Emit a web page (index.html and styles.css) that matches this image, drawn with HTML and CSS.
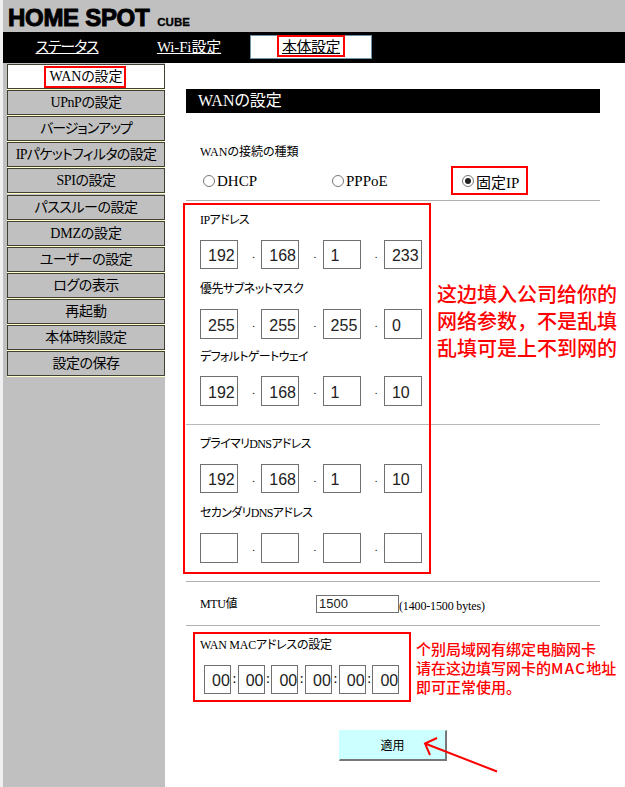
FILE: index.html
```html
<!DOCTYPE html>
<html lang="ja">
<head>
<meta charset="utf-8">
<title>HOME SPOT CUBE</title>
<link rel="stylesheet" href="styles.css">
</head>
<body>
<header class="brand"><span class="brand-name">HOME SPOT</span><span class="brand-sub">CUBE</span></header>
<nav class="tabs">
  <a class="tab"><span class="t tab-status">ステータス</span></a>
  <a class="tab"><span class="t tab-wifi">Wi-Fi設定</span></a>
  <a class="tab active"><span class="t tab-unit">本体設定</span></a>
</nav>
<div class="body">
  <aside class="side">
    <ul class="menu">
      <li class="current tight"><span class="t">WANの設定</span></li>
      <li><span class="t">UPnPの設定</span></li>
      <li class="tightest"><span class="t">バージョンアップ</span></li>
      <li class="tighter"><span class="t">IPパケットフィルタの設定</span></li>
      <li class="tall"><span class="t">SPIの設定</span></li>
      <li><span class="t">パススルーの設定</span></li>
      <li class="loose"><span class="t">DMZの設定</span></li>
      <li><span class="t">ユーザーの設定</span></li>
      <li><span class="t">ログの表示</span></li>
      <li class="loose"><span class="t">再起動</span></li>
      <li><span class="t">本体時刻設定</span></li>
      <li><span class="t">設定の保存</span></li>
    </ul>
  </aside>
  <main class="main">
    <h1 class="title"><span class="t title-text">WANの設定</span></h1>
    <section class="type">
      <div class="label"><span class="t l-type">WANの接続の種類</span></div>
      <div class="radios">
        <label class="radio"><i class="dot"></i><span class="t">DHCP</span></label>
        <label class="radio"><i class="dot"></i><span class="t">PPPoE</span></label>
        <label class="radio"><i class="dot on"></i><span class="t">固定IP</span></label>
      </div>
    </section>
    <section class="network">
      <div class="label"><span class="t l-ip">IPアドレス</span></div>
      <div class="addr"><input value="192"><b>.</b><input value="168"><b>.</b><input value="1"><b>.</b><input value="233"></div>
      <div class="label mask"><span class="t l-mask">優先サブネットマスク</span></div>
      <div class="addr tall"><input value="255"><b>.</b><input value="255"><b>.</b><input value="255"><b>.</b><input value="0"></div>
      <div class="label gate"><span class="t l-gate">デフォルトゲートウェイ</span></div>
      <div class="addr tall"><input value="192"><b>.</b><input value="168"><b>.</b><input value="1"><b>.</b><input value="10"></div>
    </section>
    <section class="dns">
      <div class="label"><span class="t l-dns">プライマリDNSアドレス</span></div>
      <div class="addr"><input value="192"><b>.</b><input value="168"><b>.</b><input value="1"><b>.</b><input value="10"></div>
      <div class="label dns2"><span class="t l-dns">セカンダリDNSアドレス</span></div>
      <div class="addr tall"><input><b>.</b><input><b>.</b><input><b>.</b><input></div>
    </section>
    <section class="mtu">
      <div class="label"><span class="t l-mtu">MTU値</span></div>
      <input class="mtu-input" value="1500"><span class="t mtu-range">(1400-1500 bytes)</span>
    </section>
    <section class="mac">
      <div class="label"><span class="t l-mac">WAN MACアドレスの設定</span></div>
      <div class="mac-row"><input value="00"><b>:</b><input value="00"><b>:</b><input value="00"><b>:</b><input value="00"><b>:</b><input value="00"><b>:</b><input value="00"></div>
    </section>
    <button class="apply"><span class="t apply-text">適用</span></button>
  </main>
</div>
<div class="mark mark-menu"></div>
<div class="mark mark-tab"></div>
<div class="mark mark-radio"></div>
<div class="mark mark-network"></div>
<div class="mark mark-mac"></div>
<p class="note note-network" lang="zh-CN"><span class="t">这边填入公司给你的</span><br><span class="t">网络参数，不是乱填</span><br><span class="t">乱填可是上不到网的</span></p>
<p class="note note-mac" lang="zh-CN"><span class="t">个别局域网有绑定电脑网卡</span><br><span class="t">请在这边填写网卡的<span class="latin">MAC</span>地址</span><br><span class="t">即可正常使用。</span></p>
<svg class="arrow" width="80" height="40" viewBox="0 0 80 40"><path d="M77 36.500L5 8.500M17 3L5 8.500L10 20" fill="none" stroke="#f00" stroke-width="2"/></svg>
</body>
</html>
```
FILE: styles.css
```css
* { box-sizing: border-box; }
body {
  margin: 0;
  width: 625px;
  height: 787px;
  position: relative;
  overflow: hidden;
  background: #fff;
  border-left: 3px solid #f0f0f0;
  color: #000;
  font-family: "Liberation Serif", "Noto Sans CJK JP", serif;
  font-size: 15px;
  font-feature-settings: "palt";
}
.t { white-space: nowrap; }
.brand {
  height: 32px;
  background: #c0c0c0;
  padding-left: 5px;
  font-family: "Liberation Sans", sans-serif;
  font-weight: bold;
  line-height: 35px;
  white-space: nowrap;
}
.brand-name { font-size: 24px; letter-spacing: -0.300px; -webkit-text-stroke: 1px #000; }
.brand-sub { font-size: 11.500px; margin-left: 8px; -webkit-text-stroke: 0.3px #000; }
.tabs {
  height: 31px;
  background: #000;
  display: flex;
  padding-top: 3px;
  padding-left: 3px;
}
.tab {
  width: 122px;
  height: 24px;
  display: flex;
  justify-content: center;
  line-height: 24px;
  color: #fff;
  text-decoration: underline;
}
.tab.active {
  background: #fff;
  color: #000;
  border: 1px solid #6f93ab;
}
.tab-status { letter-spacing: -1.100px; }
.tab-wifi { letter-spacing: -0.150px; }
.tab-unit { letter-spacing: -0.500px; }
.tab.active { line-height: 22px; }
.body { display: flex; height: 724px; }
.side { width: 162px; background: #c0c0c0; padding: 1px 0 0 4px; }
.menu { list-style: none; margin: 0; padding: 0; }
.menu li {
  height: 25px;
  margin-bottom: 1px;
  border: 1px solid #404034;
  box-shadow: 0 1px #ffffcc;
  line-height: 23px;
  text-align: center;
  font-size: 14px;
  letter-spacing: -0.450px;
}
.menu .tall { margin-bottom: 2px; }
.menu .current { background: #fff; }
.menu .tight { letter-spacing: -0.100px; }
.menu .tighter { letter-spacing: -0.700px; }
.menu .tightest { letter-spacing: -1.100px; }
.menu .loose { letter-spacing: -0.200px; }
.main { width: 414px; margin-left: 21px; padding-top: 26px; }
.title {
  margin: 0;
  height: 24px;
  padding-left: 12px;
  background: #000;
  color: #fff;
  font-size: 16px;
  font-weight: normal;
  line-height: 24px;
}
.label { height: 20px; line-height: 20px; padding-left: 14px; font-size: 12px; }
.l-ip { letter-spacing: -0.600px; }
.l-mask { letter-spacing: -0.500px; }
.l-gate, .l-dns { letter-spacing: -0.650px; }
.l-mtu { letter-spacing: -0.400px; }
.l-mac { letter-spacing: -0.250px; }
.type { height: 88px; padding-top: 29px; border-bottom: 1px solid #b0b0b0; }
.radios { display: flex; margin-top: 9px; padding-left: 17px; }
.radio { width: 129px; height: 20px; display: flex; align-items: center; gap: 2px; }
.dot {
  width: 12px;
  height: 12px;
  border: 1px solid #777;
  border-radius: 50%;
  display: grid;
  place-items: center;
}
.dot.on { margin-left: 1px; }
.dot.on::after { content: ""; width: 6px; height: 6px; border-radius: 50%; background: #222; }
.network { height: 224px; padding-top: 9px; border-bottom: 1px solid #b8b8b8; }
.addr { display: flex; height: 29px; margin-top: 10px; padding-left: 14px; }
.addr.tall { height: 30px; }
input {
  width: 38px;
  height: 100%;
  margin: 0;
  padding: 3px 0 0 7px;
  border: 1px solid #707070;
  border-radius: 0;
  background: #fff;
  color: #222;
  font-family: "Liberation Sans", sans-serif;
  font-size: 16px;
  outline: none;
}
.addr b {
  width: 23.300px;
  padding-left: 8px;
  text-align: center;
  font-weight: normal;
  font-size: 11px;
  line-height: 28px;
}
.mask { margin-top: 10px; }
.gate { margin-top: 8px; }
.gate + .addr { margin-top: 9px; }
.dns { height: 157px; padding-top: 9px; border-bottom: 1px solid #b0b0b0; }
.dns2 { margin-top: 10px; }
.mtu { height: 44px; display: flex; align-items: flex-start; padding-top: 12px; border-bottom: 1px solid #b0b0b0; }
.mtu .label { width: 130px; }
.mtu-input { width: 83px; height: 18px; margin-top: 1px; padding: 0 0 1px 2px; font-size: 13px; }
.mtu-range { font-size: 12px; line-height: 24px; letter-spacing: -0.150px; }
.mac { height: 104px; padding-top: 9px; }
.mac-row { display: flex; height: 29px; margin-top: 10px; padding-left: 18px; }
.mac-row input { width: 27px; }
.mac-row b { width: 6.700px; text-align: center; font-weight: normal; font-size: 14px; line-height: 28px; }
.apply {
  display: block;
  width: 108px;
  height: 31px;
  margin-left: 153px;
  padding: 0;
  background: #cff;
  border: 1px solid #cff;
  border-right: 2px solid #777;
  border-bottom: 2px solid #777;
  font-family: "Liberation Serif", "Noto Sans CJK JP", serif;
  font-size: 12px;
}
.mark { position: absolute; border: 2px solid #f00; }
.mark-menu { left: 41px; top: 66px; width: 82px; height: 22px; }
.mark-tab { left: 274px; top: 35px; width: 68px; height: 22px; }
.mark-radio { left: 448px; top: 166px; width: 77px; height: 29px; }
.mark-network { left: 180px; top: 203px; width: 248px; height: 371px; }
.mark-mac { left: 190px; top: 632px; width: 218px; height: 70px; }
.note {
  position: absolute;
  margin: 0;
  color: #f00;
  font-family: "Noto Sans CJK SC", sans-serif;
  font-feature-settings: normal;
  font-weight: 500;
  white-space: nowrap;
}
.note-network { left: 434px; top: 280px; font-size: 20px; line-height: 27px; }
.note-mac { left: 413px; top: 639px; font-size: 15px; line-height: 19px; }
.latin { letter-spacing: 1.300px; }
.arrow { position: absolute; left: 417px; top: 735px; }
```
